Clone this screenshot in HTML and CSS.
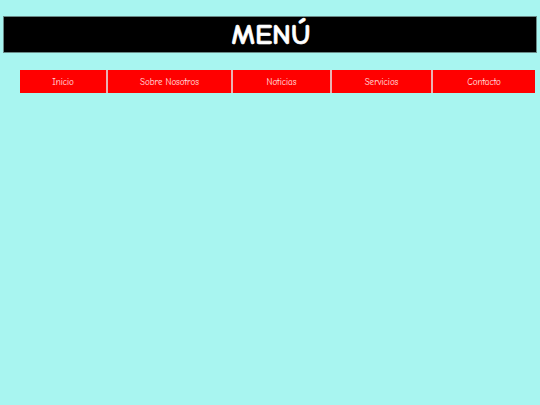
FILE: index.html
```html
<!DOCTYPE html>
<html lang="es">
<head>
<meta charset="utf-8">
<title>Menú</title>
<link rel="stylesheet" href="styles.css">
</head>
<body>
<header class="banner">
  <h1 class="title">MENÚ</h1>
</header>
<nav class="menu">
  <a class="item item-inicio" href="#">Inicio</a>
  <a class="item item-sobre" href="#">Sobre Nosotros</a>
  <a class="item item-noticias" href="#">Noticias</a>
  <a class="item item-servicios" href="#">Servicios</a>
  <a class="item item-contacto" href="#">Contacto</a>
</nav>
</body>
</html>
```
FILE: styles.css
```css
html, body {
  margin: 0;
  padding: 0;
}
body {
  background: #a8f5f0;
  font-family: "Comic Neue", "Comic Sans MS", "Open Sans", "DejaVu Sans", sans-serif;
  width: 540px;
  height: 405px;
  padding-top: 16px;
  box-sizing: border-box;
}
.banner {
  margin: 0 3px;
  height: 37px;
  background: #000;
  border: 1px solid #6a8a88;
  box-sizing: border-box;
  display: flex;
  align-items: center;
  justify-content: center;
}
.title {
  margin: 0;
  color: #fff;
  font-size: 29px;
  font-weight: 900;
  line-height: 1;
  transform: translateX(1px);
  -webkit-text-stroke: 0.6px #fff;
}
.menu {
  display: flex;
  margin: 17px 5px 0 20px;
  height: 23px;
}
.item {
  display: flex;
  align-items: center;
  justify-content: center;
  background: #ff0000;
  color: #ffe4e4;
  text-decoration: none;
  font-size: 9px;
  border-right: 2px solid #e9b3b3;
  box-sizing: border-box;
}
.item-contacto { border-right: 0; }
.item-inicio { width: 88px; }
.item-sobre { width: 125px; }
.item-noticias { width: 99px; }
.item-servicios { width: 101px; }
.item-contacto { width: 102px; }
```
